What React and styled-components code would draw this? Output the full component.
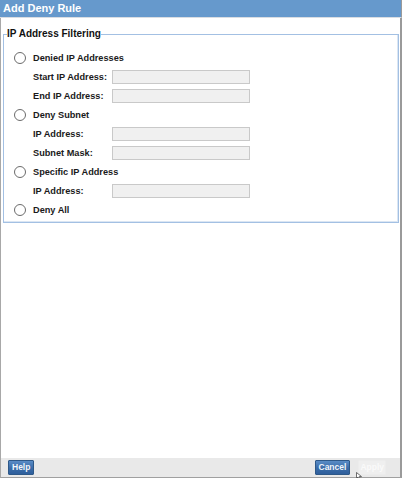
import React from "react";
import styled, { createGlobalStyle } from "styled-components";

const Global = createGlobalStyle`
  html, body { margin: 0; padding: 0; background: #fff; }
  body { font-family: "Liberation Sans", Arial, sans-serif; }
`;

const Dialog = styled.div`
  position: relative;
  width: 402px;
  height: 478px;
  display: flex;
  flex-direction: column;
  box-sizing: border-box;
  overflow: hidden;
`;

const Header = styled.div`
  height: 17px;
  background: #6699cc;
  color: #fff;
  font-weight: bold;
  font-size: 11px;
  line-height: 17px;
  padding-left: 3px;
  border-bottom: 1px solid #d9dde2;
  border-right: 1px solid #9a9a9a;
`;

const Body = styled.div`
  flex: 1;
  border-left: 1px solid #a8a8a8;
  border-right: 2px solid #9a9a9a;
  padding: 10px 1px 0 2px;
`;

const Fieldset = styled.fieldset`
  margin: 0;
  padding: 0 0 3px 3px;
  border: 1px solid #a3c0e3;
  box-shadow: inset -1px -1px 0 #dbe6f3;
`;

const Legend = styled.legend`
  padding: 0;
  font-size: 10px;
  line-height: 12px;
  font-weight: bold;
  color: #111;
`;

const List = styled.div`
  padding: 8px 0 0 7px;
  display: flex;
  flex-direction: column;
`;

const Row = styled.div`
  height: 19px;
  display: flex;
  align-items: center;
  padding-left: ${(p) => (p.$sub ? "19px" : "0")};
`;

const Radio = styled.span`
  width: 10px;
  height: 10px;
  border: 1px solid #6b6b6b;
  border-radius: 50%;
  background: #fff;
  margin-right: 7px;
  flex: none;
`;

const Label = styled.span`
  font-size: 9.2px;
  font-weight: bold;
  color: #1a1a1a;
  width: ${(p) => (p.$w ? p.$w : "auto")};
  flex: none;
`;

const Input = styled.span`
  width: 136px;
  height: 12px;
  background: #f0f0f0;
  border: 1px solid #c9c9c9;
`;

const Footer = styled.div`
  height: 19px;
  background: #e9e9e9;
  border-left: 1px solid #a8a8a8;
  border-right: 2px solid #9a9a9a;
  border-bottom: 1px solid #a0a0a0;
  display: flex;
  align-items: center;
  padding: 0 14px 0 7px;
`;

const Button = styled.span`
  height: 13px;
  line-height: 13px;
  padding: 0 ${(p) => p.$pad || "3px"};
  font-size: 8.5px;
  font-weight: bold;
  color: ${(p) => (p.$disabled ? "#fafafa" : "#f2f6fb")};
  background: ${(p) =>
    p.$disabled
      ? "#efefef"
      : "linear-gradient(#5a8cc6, #3a6ca8 55%, #2f5f9c)"};
  border: 1px solid ${(p) => (p.$disabled ? "#ececec" : "#2e5888")};
  border-radius: 1px;
  margin-left: ${(p) => p.$ml || "0"};
`;

const Spacer = styled.div`
  flex: 1;
`;

const Cursor = styled.svg`
  position: absolute;
  left: 356px;
  top: 472px;
`;

function FieldRow({ label }) {
  return (
    <Row $sub>
      <Label $w="79px">{label}</Label>
      <Input />
    </Row>
  );
}

function RadioRow({ label }) {
  return (
    <Row>
      <Radio />
      <Label>{label}</Label>
    </Row>
  );
}

export default function App() {
  return (
    <>
      <Global />
      <Dialog>
        <Header>Add Deny Rule</Header>
        <Body>
          <Fieldset>
            <Legend>IP Address Filtering</Legend>
            <List>
              <RadioRow label="Denied IP Addresses" />
              <FieldRow label="Start IP Address:" />
              <FieldRow label="End IP Address:" />
              <RadioRow label="Deny Subnet" />
              <FieldRow label="IP Address:" />
              <FieldRow label="Subnet Mask:" />
              <RadioRow label="Specific IP Address" />
              <FieldRow label="IP Address:" />
              <RadioRow label="Deny All" />
            </List>
          </Fieldset>
        </Body>
        <Footer>
          <Button>Help</Button>
          <Spacer />
          <Button $pad="3px">Cancel</Button>
          <Button $disabled $pad="1px" $ml="8px">Apply</Button>
        </Footer>
        <Cursor width="8" height="8" viewBox="0 0 8 8">
          <path d="M0.5 0.5 L0.5 6.5 L2 5 L3.5 7.5 L4.5 7 L3.2 4.6 L5.5 4.6 Z" fill="#fff" stroke="#333" strokeWidth="0.7" />
        </Cursor>
      </Dialog>
    </>
  );
}
